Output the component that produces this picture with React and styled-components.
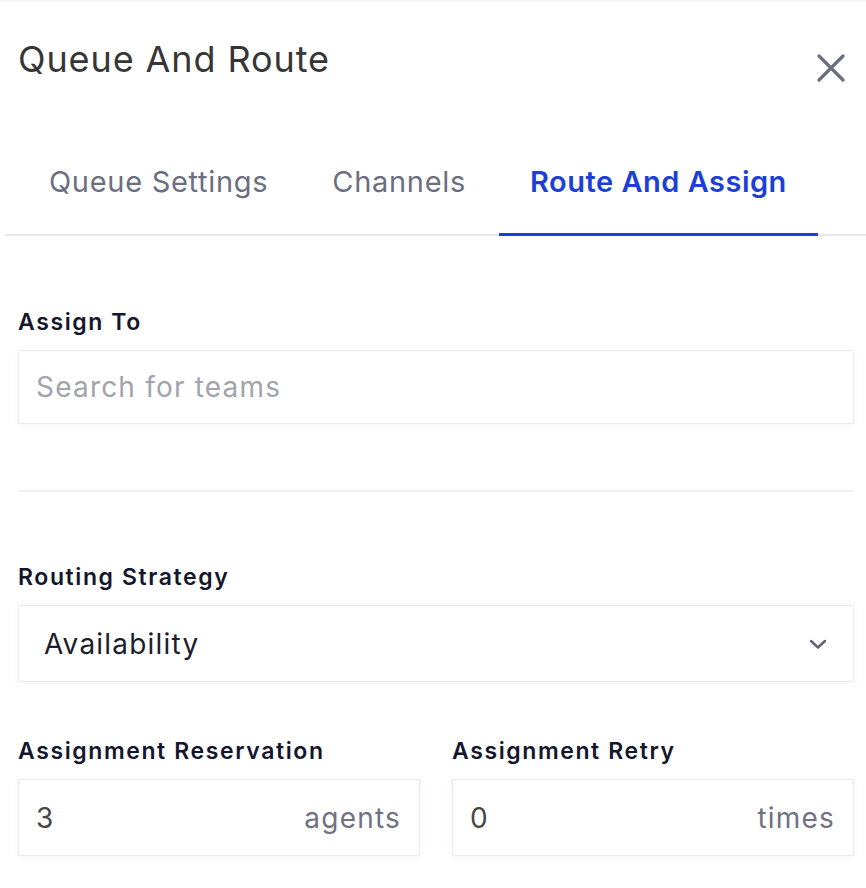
import React from "react";
import styled, { createGlobalStyle } from "styled-components";

const GlobalStyle = createGlobalStyle`
    body {
        margin: 0;
        background: #ffffff;
        font-family: "Inter", "Liberation Sans", sans-serif;
    }
`;

const Panel = styled.div`
    width: 866px;
    height: 888px;
    box-sizing: border-box;
    border-top: 2px solid #f4f4f5;
    overflow: hidden;
`;

const Header = styled.header`
    display: flex;
    align-items: center;
    justify-content: space-between;
    height: 114px;
    padding: 0 20px 0 18px;
    box-sizing: border-box;
`;

const Title = styled.h1`
    margin: 0;
    font-size: 36px;
    font-weight: 400;
    color: #363636;
    letter-spacing: 0.9px;
`;

const CloseButton = styled.button`
    border: 0;
    background: none;
    padding: 0;
    width: 30px;
    height: 30px;
    margin-top: 18px;
    cursor: pointer;
    color: #6b6e7f;
`;

const TabBar = styled.nav`
    display: flex;
    gap: 2px;
    margin-left: 5px;
    padding-left: 13px;
    height: 120px;
    align-items: stretch;
    border-bottom: 2px solid #e6e7eb;
    box-sizing: border-box;
`;

const Tab = styled.div`
    display: flex;
    align-items: center;
    padding: 14px 31px 0;
    font-size: 29px;
    letter-spacing: ${props => (props.$active ? 0.5 : 0.7)}px;
    font-weight: ${props => (props.$active ? 600 : 400)};
    color: ${props => (props.$active ? "#1c3fd8" : "#6b6e80")};
    border-bottom: 3px solid ${props => (props.$active ? "#1c3fd8" : "transparent")};
    margin-bottom: -2px;
`;

const Body = styled.div`
    padding: 0 12px 0 18px;
`;

const Field = styled.div`
    display: flex;
    flex-direction: column;
    flex: 1;
`;

const Label = styled.label`
    display: flex;
    align-items: center;
    height: 60px;
    padding-top: 4px;
    box-sizing: border-box;
    font-size: 23px;
    font-weight: 600;
    letter-spacing: 1.6px;
    color: #14162e;
`;

const Box = styled.div`
    display: flex;
    align-items: center;
    justify-content: space-between;
    height: ${props => props.$height || 75}px;
    box-sizing: border-box;
    padding: 0 ${props => props.$padRight || 18}px 0 ${props => props.$padLeft || 17}px;
    border: 1px solid #ebebed;
    background: #fff;
    box-shadow: 0 2px 8px rgba(0, 0, 0, 0.035);
    font-size: 28px;
    letter-spacing: 1.2px;
`;

const Placeholder = styled.span`
    color: #a1a3ad;
`;

const Value = styled.span`
    color: ${props => (props.$strong ? "#1c1d2e" : "#474747")};
`;

const Suffix = styled.span`
    color: #6f7283;
`;

const Divider = styled.hr`
    border: 0;
    border-top: 2px solid #f1f1f3;
    margin: 66px 0 0;
`;

const Row = styled.div`
    display: flex;
    gap: 32px;
`;

const Spacer = styled.div`
    height: ${props => props.$h}px;
`;

const App = () => (
    <>
        <GlobalStyle />
        <Panel>
            <Header>
                <Title>Queue And Route</Title>
                <CloseButton aria-label="Close">
                    <svg width="30" height="30" viewBox="0 0 30 30" fill="none">
                        <path d="M3 3L27 27M27 3L3 27" stroke="currentColor" strokeWidth="3.2" strokeLinecap="round" />
                    </svg>
                </CloseButton>
            </Header>
            <TabBar>
                <Tab>Queue Settings</Tab>
                <Tab>Channels</Tab>
                <Tab $active>Route And Assign</Tab>
            </TabBar>
            <Body>
                <Spacer $h={54} />
                <Field>
                    <Label>Assign To</Label>
                    <Box $height={74}>
                        <Placeholder>Search for teams</Placeholder>
                    </Box>
                </Field>
                <Divider />
                <Spacer $h={53} />
                <Field>
                    <Label>Routing Strategy</Label>
                    <Box $height={77} $padLeft={25} $padRight={26}>
                        <Value $strong>Availability</Value>
                        <svg width="18" height="12" viewBox="0 0 18 12" fill="none">
                            <path d="M2 3L9 9.5L16 3" stroke="#5f6274" strokeWidth="2.4" strokeLinecap="round" strokeLinejoin="round" />
                        </svg>
                    </Box>
                </Field>
                <Spacer $h={37} />
                <Row>
                    <Field>
                        <Label>Assignment Reservation</Label>
                        <Box $height={77}>
                            <Value>3</Value>
                            <Suffix>agents</Suffix>
                        </Box>
                    </Field>
                    <Field>
                        <Label>Assignment Retry</Label>
                        <Box $height={77}>
                            <Value>0</Value>
                            <Suffix>times</Suffix>
                        </Box>
                    </Field>
                </Row>
            </Body>
        </Panel>
    </>
);

export default App;
